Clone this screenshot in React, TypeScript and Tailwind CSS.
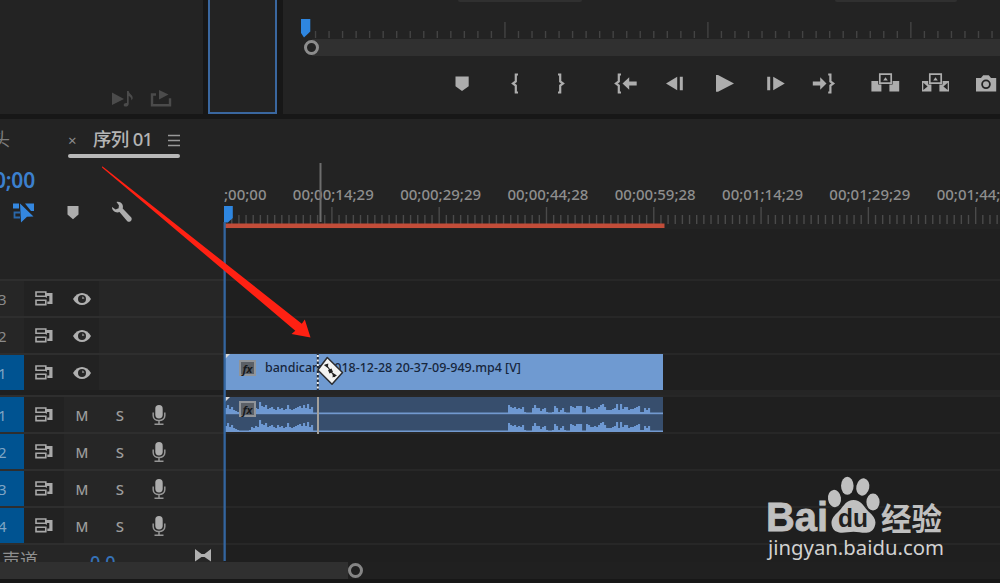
import type { ReactNode } from "react";

interface Track {
  id: string;
  tipo: "video" | "audio";
  ativo: boolean;
}

const VIDEO_TRACKS: Track[] = [
  { id: "3", tipo: "video", ativo: false },
  { id: "2", tipo: "video", ativo: false },
  { id: "1", tipo: "video", ativo: true },
];

const AUDIO_TRACKS: Track[] = [
  { id: "1", tipo: "audio", ativo: true },
  { id: "2", tipo: "audio", ativo: true },
  { id: "3", tipo: "audio", ativo: true },
  { id: "4", tipo: "audio", ativo: true },
];

const TIMECODES = [
  "00;00;14;29",
  "00;00;29;29",
  "00;00;44;28",
  "00;00;59;28",
  "00;01;14;29",
  "00;01;29;29",
  "00;01;44;28",
];

const FONT = "font-['Noto_Sans','Noto_Sans_CJK_SC',sans-serif]";

/* ---------- monitor ---------- */

const line = { fill: "none", stroke: "currentColor", strokeWidth: 2.2 };

const TRANSPORT: { nome: string; margem: string; icone: ReactNode }[] = [
  {
    nome: "marker",
    margem: "ml-[163px]",
    icone: <path d="M9.5 4.5h13.2v9.8L16 19l-6.5-4.7z" />,
  },
  {
    nome: "in",
    margem: "ml-[21px]",
    icone: <path d="M19 2.5h-2.2v7L14 11.5l2.8 2v7H19" {...line} />,
  },
  {
    nome: "out",
    margem: "ml-[13px]",
    icone: <path d="M14 2.5h2.2v7l2.8 2-2.8 2v7H14" {...line} />,
  },
  {
    nome: "go-in",
    margem: "ml-[33px]",
    icone: (
      <>
        <path d="M12 2.5H9.8v7L7 11.5l2.8 2v7H12" {...line} />
        <path d="M13.5 11.5l6.7-6.3v4.3h7.5v4h-7.5v4.3z" />
      </>
    ),
  },
  {
    nome: "step-back",
    margem: "ml-[18px]",
    icone: <path d="M7 11.5L18.2 4.8v13.4zM20.8 4.8h3v13.4h-3z" />,
  },
  {
    nome: "play",
    margem: "ml-[17px]",
    icone: <path d="M8 3h2l16 8.5-16 8.2H8z" />,
  },
  {
    nome: "step-fwd",
    margem: "ml-[19px]",
    icone: <path d="M25.8 11.5L14.2 4.8v13.4zM8.2 4.8h3v13.4h-3z" />,
  },
  {
    nome: "go-out",
    margem: "ml-[16px]",
    icone: (
      <>
        <path d="M21.2 2.5h2.2v7l2.8 2-2.8 2v7h-2.2" {...line} />
        <path d="M19.5 11.5l-6.3-6.3v4.3H5.8v4h7.4v4.3z" />
      </>
    ),
  },
  {
    nome: "lift",
    margem: "ml-[30px]",
    icone: (
      <>
        <path d="M10.8 2.2h11.4v9H10.8z" fill="none" stroke="currentColor" strokeWidth="1.7" />
        <path d="M14.2 8.6l2.3-3.4 2.3 3.4zM2.4 9h6.8v3.5h3.2v7h-10zM30.2 9h-6.6v3.5h-3.2v7h9.8z" />
      </>
    ),
  },
  {
    nome: "extract",
    margem: "ml-[18px]",
    icone: (
      <>
        <path d="M10.8 2.2h11.4v9H10.8z" fill="none" stroke="currentColor" strokeWidth="1.7" />
        <path d="M14.2 8.6l2.3-3.4 2.3 3.4zM3 9h6.2v3.5h3.2v7H3zM30 9h-6.4v3.5h-3.2v7H30z" />
        <path d="M4.3 10.8L8.6 14.5l-4.3 3.6zM28.7 10.8l-4.3 3.7 4.3 3.6z" fill="#232323" />
      </>
    ),
  },
  {
    nome: "camera",
    margem: "ml-[19px]",
    icone: (
      <>
        <path d="M6 6h5l2.2-2.8h5.6L21 6h5.2v13.4H6z" />
        <circle cx="16" cy="12.3" r="3.9" fill="none" stroke="#232323" strokeWidth="1.8" />
      </>
    ),
  },
];

function MonitorRuler() {
  const ticks = Array.from({ length: 51 }, (_, i) => i + 1);
  return (
    <svg className="block shrink-0" width="717" height="20" viewBox="283 19 717 20">
      {ticks.map((i) => {
        const x = 302 + i * 13.53;
        const maior = i % 15 === 0;
        return (
          <rect key={i} x={x - 0.7} y={maior ? 22 : 31} width="1.4" height={maior ? 16 : 7} fill="#434343" />
        );
      })}
      <path d="M301 19h9.3v12.5L304 37.5 301 33z" fill="#2e86e0" />
    </svg>
  );
}

function Monitor() {
  return (
    <div className="flex h-[114px] w-[717px] flex-col overflow-hidden bg-[#232323]">
      <div className="flex h-[19px] shrink-0 items-start overflow-hidden">
        <span className="-mt-[21px] ml-[42px] w-[133px] text-[15px] leading-6 text-[#174475]">00;00;00;00</span>
        <div className="h-[2px] w-[124px] rounded-b bg-[#303030]" />
        <div className="ml-[253px] h-[2px] w-[122px] rounded-b bg-[#303030]" />
      </div>
      <MonitorRuler />
      <div className="flex h-[17px] shrink-0 items-center bg-[#303030]">
        <div className="h-full w-[29px] bg-[#232323]" />
        <div className="-ml-[8px] h-[15px] w-[15px] rounded-full border-[3px] border-[#8c8c8c] bg-[#232323]" />
      </div>
      <div className="mt-4 flex shrink-0 items-center">
        {TRANSPORT.map((b) => (
          <svg key={b.nome} className={`block h-6 w-8 shrink-0 text-[#adadad] ${b.margem}`} viewBox="0 0 32 24" fill="currentColor">
            {b.icone}
          </svg>
        ))}
      </div>
    </div>
  );
}

function TopPanels() {
  return (
    <div className="flex h-[115px] shrink-0">
      <div className="flex h-[114px] w-[203px] items-end gap-4 bg-[#232323] pb-[5px] pl-[111px]">
        <svg width="23" height="20" viewBox="0 0 23 20" fill="#4b4b4b">
          <path d="M1 3.500l12 6.500L1 16z" />
          <path d="M16 2h1.700c.3 3 4.300 3.500 4 7.500l-1.200 2c0-3-1.300-3.800-2.800-4.500V15c0 3-5 3.500-5 1 0-1.700 1.800-2.400 3.300-2z" />
        </svg>
        <svg width="22" height="20" viewBox="0 0 22 20" fill="#4b4b4b">
          <path d="M9 1l9.500 4.500L9 10.500z" />
          <path d="M6 5.500H2v10.700h18v-7" fill="none" stroke="#4b4b4b" strokeWidth="2.4" />
        </svg>
      </div>
      <div className="ml-[5px] h-[114px] w-[69px] border-2 border-t-0 border-[#3a679f] bg-[#232323]" />
      <div className="w-[6px]" />
      <Monitor />
    </div>
  );
}

/* ---------- timeline ---------- */

function TimelineControls() {
  return (
    <div className="flex h-[160px] w-[224px] shrink-0 flex-col overflow-hidden bg-[#232323]">
      <div className="flex h-[35px] shrink-0 items-center text-[18px] text-[#b4b4b4]">
        <span className="-ml-[8px] mt-[5px] w-[20px] text-[#7c7c7c]">头</span>
        <span className="ml-[56px] mt-[7px] w-[8px] text-[15px] text-[#8c8c8c]">×</span>
        <span className="ml-[17px] mt-[5px] w-[61px] whitespace-nowrap text-[18.5px] font-medium tracking-[-0.7px]">序列 01</span>
        <svg className="ml-[14px] mt-[8px]" width="12" height="13" viewBox="0 0 12 13" stroke="#999" strokeWidth="1.7">
          <path d="M0 1.500h12M0 6.500h12M0 11.500h12" />
        </svg>
      </div>
      <div className="ml-[68px] h-[4px] w-[112px] shrink-0 rounded-full bg-[#b8b8b8]" />
      <div className="flex h-[38px] w-[35px] shrink-0 items-center justify-end pt-[7px] text-[21px] font-semibold tracking-[-0.2px] text-[#3c80ce]">
        0;00
      </div>
      <div className="mt-[2px] flex h-[28px] shrink-0 items-center pl-[12px] text-[#adadad]">
        <svg width="22" height="22" viewBox="0 0 22 22" fill="#3487df">
          <path d="M1 2.500h6v5H1zM13 2.500h9V10h-3zM8 2.500l13.500 13-6.500.3L9 21.500z" />
          <path d="M8 11.500H2.500v5H8" fill="none" stroke="#2a67a9" strokeWidth="1.8" />
        </svg>
        <svg className="ml-[32px]" width="14" height="16" viewBox="0 0 14 16" fill="currentColor">
          <path d="M1.500 2h11v8.500L7 15.200l-5.500-4.700z" />
        </svg>
        <svg className="ml-[31px]" width="22" height="22" viewBox="0 0 22 22" fill="currentColor">
          <path d="M5.500 1c4-1 7.500 2.500 6.200 6.500l8.600 9c1.500 2.700-1.500 5.500-4 3.800L8.500 11C5 12.500.7 9.700 1 6l3.600 2.600 3-1.400.3-3z" />
        </svg>
      </div>
    </div>
  );
}

function Ruler() {
  const ticks = Array.from({ length: 108 }, (_, i) => i + 1);
  return (
    <div className="flex h-[160px] w-[776px] flex-col bg-[#202020]">
      <div className="flex h-[86px] shrink-0 items-end overflow-hidden whitespace-nowrap bg-[#232323] pb-px text-[15px] font-medium leading-5 text-[#8e8e8e]">
        <span className="w-[55.7px] shrink-0">;00;00</span>
        {TIMECODES.map((t) => (
          <span key={t} className="w-[107.3px] shrink-0 text-center">
            {t}
          </span>
        ))}
      </div>
      <svg className="block shrink-0 bg-[#232323]" width="776" height="24" viewBox="224 205 776 24">
        {ticks.map((i) => {
          const x = 224.6 + i * 7.153;
          const maior = i % 15 === 0;
          return (
            <rect key={i} x={x - 0.7} y={maior ? 207 : 215} width="1.4" height={maior ? 17 : 9} fill="#4a4a4a" />
          );
        })}
        <rect x="225" y="223.500" width="439.500" height="4.500" fill="#c24d39" />
        <path d="M224 206h8.800v12l-5 4.500H224z" fill="#2e86e0" />
      </svg>
    </div>
  );
}

function SyncIcon() {
  return (
    <svg className="block shrink-0" width="18" height="15" viewBox="0 0 18 15" fill="none" stroke="#a9a9a9" strokeWidth="1.600">
      <path d="M1 1h9.800v4.300H1zM1 9.300h9.800v4.300H1z" />
      <path d="M10.800 2h6.700v11h-5.200v-2.500h2V5h-2.500v1.800h-1z" fill="#a9a9a9" stroke="none" />
    </svg>
  );
}

function EyeIcon() {
  return (
    <svg className="ml-[20px] block shrink-0" width="18" height="14" viewBox="0 0 18 14">
      <path d="M0 7C4.500-1 13.500-1 18 7c-4.500 8-13.500 8-18 0z" fill="#b0b0b0" />
      <circle cx="9" cy="7" r="4" fill="#262626" />
      <path d="M9 4.600a2.400 2.400 0 0 1 2.400 2.400H9z" fill="#777" />
    </svg>
  );
}

function MicIcon() {
  return (
    <svg className="block shrink-0" width="14" height="22" viewBox="0 0 14 22" fill="#adadad">
      <rect x="3.300" y="1" width="7.400" height="13.500" rx="3.700" />
      <path d="M1.200 8.500v3.200c0 6.500 11.600 6.500 11.600 0V8.500M7 16.500V20M2.500 20.200h9" fill="none" stroke="#969696" strokeWidth="1.500" />
    </svg>
  );
}

function TrackHeader({ track }: { track: Track }) {
  return (
    <div className="flex h-[37px] shrink-0 items-center border-t-2 border-[#2e2e2e] bg-[#262626]">
      <div
        className={`flex h-full w-6 shrink-0 items-center text-[15px] ${
          track.ativo ? "bg-[#005391] text-[#7fa5c4]" : "bg-[#262626] text-[#8a8a8a]"
        }`}
      >
        <span className="-ml-[2px] mt-px">{track.id}</span>
      </div>
      <div
        className={`flex h-full shrink-0 items-center bg-[#222222] pl-[11px] ${
          track.tipo === "video" ? "w-[75px]" : "w-[40px]"
        }`}
      >
        <SyncIcon />
        {track.tipo === "video" && <EyeIcon />}
      </div>
      {track.tipo === "audio" && (
        <>
          <span className="ml-[8px] mt-[2px] w-[20px] text-center text-[14px] font-medium text-[#9c9c9c]">M</span>
          <span className="ml-[18px] mt-[2px] w-[20px] text-center text-[15px] font-medium text-[#9c9c9c]">S</span>
          <div className="ml-[22px]">
            <MicIcon />
          </div>
        </>
      )}
    </div>
  );
}

function TrackHeaders() {
  return (
    <div className="flex h-[283px] w-[224px] shrink-0 flex-col overflow-hidden">
      {VIDEO_TRACKS.map((t) => (
        <TrackHeader key={t.id} track={t} />
      ))}
      <div className="h-[5px] shrink-0 bg-[#1f1f1f]" />
      {AUDIO_TRACKS.map((t) => (
        <TrackHeader key={t.id} track={t} />
      ))}
      <div className="flex h-[19px] shrink-0 items-start overflow-hidden border-t-2 border-[#2e2e2e] bg-[#262626]">
        <span className="ml-[2px] mt-[5px] w-[88px] text-[18px] leading-[20px] text-[#8f8f8f]">声道</span>
        <span className="mt-[7px] w-[104px] text-[18px] font-medium leading-[20px] text-[#3672b8]">0.0</span>
        <svg className="mt-[4px]" width="18" height="13" viewBox="0 0 18 13" fill="#b0b0b0">
          <path d="M1 0l6.500 5h3L17 0v12.500L10.500 8h-3L1 12.500z" />
        </svg>
      </div>
    </div>
  );
}

function FxBadge() {
  return (
    <span className="flex h-[16px] w-[17px] shrink-0 items-center justify-center border-2 border-[#909499] bg-[#5b6067] text-[11px] font-bold italic leading-none text-[#16191d]">
      fx
    </span>
  );
}

// one peak height per 2px column
const ONDA_INICIO = [5, 8, 4, 6, 3, 2, 1, 0, 0, 0, 0, 0, 1, 4, 3, 5, 4, 11, 7, 6, 8, 4, 5, 6, 4, 3, 6, 4, 5, 3, 4, 8, 4, 3, 4, 5, 6, 7, 5, 8, 5, 9, 4, 6];
const ONDA_FIM = [8, 6, 5, 6, 4, 5, 4, 6, 1, 0, 0, 0, 5, 8, 5, 5, 2, 4, 5, 1, 0, 0, 1, 7, 5, 1, 3, 5, 1, 0, 0, 7, 6, 5, 7, 7, 7, 0, 0, 7, 6, 4, 4, 5, 4, 6, 8, 9, 6, 3, 3, 3, 4, 5, 9, 3, 9, 4, 6, 6, 3, 4, 4, 5, 6, 7, 1, 1, 5, 3, 5];

function Waveform({ base }: { base: number }) {
  return (
    <g fill="#6d98d2">
      {ONDA_INICIO.map((h, i) => (
        <rect key={`a${i}`} x={1 + i * 2} y={base - h} width="2.100" height={h} />
      ))}
      {ONDA_FIM.map((h, i) => (
        <rect key={`b${i}`} x={284 + i * 2} y={base - h} width="2.100" height={h} />
      ))}
      <rect x="0" y={base - 0.5} width="439" height="1.700" fill="#7299cf" />
    </g>
  );
}

function Lanes() {
  return (
    <div className="flex h-[283px] w-[776px] flex-col overflow-hidden bg-[#1f1f1f]">
      <div className="h-[37px] shrink-0 border-t-2 border-[#272727]" />
      <div className="h-[37px] shrink-0 border-t-2 border-[#272727]" />
      <div className="flex h-[37px] shrink-0 flex-col border-t-2 border-[#272727]">
        <div className="-mt-px flex h-[36px] w-[439px] items-start bg-[#6f9ad1]">
          <svg className="shrink-0" width="6" height="6">
            <path d="M0 0h6L0 6z" fill="#d8d8d8" />
          </svg>
          <div className="ml-[9px] mt-[6px] flex items-center gap-[8px] whitespace-nowrap text-[12.5px] font-medium leading-4 text-[#17263c]">
            <FxBadge />
            <svg className="overflow-visible" width="257" height="16">
              <text x="1" y="12" textLength="256" lengthAdjust="spacingAndGlyphs" fill="currentColor">
                bandicam 2018-12-28 20-37-09-949.mp4 [V]
              </text>
            </svg>
          </div>
        </div>
      </div>
      <div className="h-[5px] shrink-0 bg-[#252525]" />
      <div className="flex h-[37px] shrink-0 border-t-2 border-[#272727]">
        <div className="grid h-[36px] w-[439px] bg-[#374e6d]">
          <svg className="col-start-1 row-start-1 block" width="439" height="36">
            <path d="M0 0h6L0 6z" fill="#d8d8d8" />
            <Waveform base={16} />
            <Waveform base={34} />
          </svg>
          <div className="col-start-1 row-start-1 pl-[15px] pt-[4px]">
            <FxBadge />
          </div>
        </div>
      </div>
      <div className="h-[37px] shrink-0 border-t-2 border-[#272727]" />
      <div className="h-[37px] shrink-0 border-t-2 border-[#272727]" />
      <div className="h-[37px] shrink-0 border-t-2 border-[#272727]" />
      <div className="h-[19px] shrink-0 border-t-2 border-[#272727]" />
    </div>
  );
}

/* ---------- overlays ---------- */

function Overlay() {
  return (
    <svg className="pointer-events-none absolute inset-0" width="1000" height="583" viewBox="0 0 1000 583">
      <rect x="223.500" y="222" width="2.300" height="339" fill="#33659f" />
      <rect x="319.500" y="163" width="2" height="59" fill="#6d6d6d" />
      <path d="M317.800 353v38" stroke="#222a36" strokeWidth="2" />
      <path d="M317.800 355v36" stroke="#f0f0f0" strokeWidth="2" strokeDasharray="2 2.500" />
      <rect x="317" y="397" width="2" height="37" fill="#a3a09b" />
      <path d="M327.300 357.500L342.500 372.500 332 384.300 317.800 370z" fill="#f4f4f2" stroke="#2b2d31" strokeWidth="1.500" strokeLinejoin="round" />
      <path d="M326 364.500l9 12.500" stroke="#222" strokeWidth="1.200" />
      <path d="M323.800 365l4.500-1.500-.5 4.500zM328 370l3.500-1.500 1.500 3.500-3.500 1.500zM337 375.500l-4.500 2 .5-4.500z" fill="#222" />
      <path d="M102.300 166.200L301.800 323.800l3-4.300 5.700 18-19-3.500 3.800-3.300L102 167.500z" fill="#ff2113" />
    </svg>
  );
}

function Watermark() {
  return (
    <svg className="pointer-events-none absolute left-[760px] top-[470px] text-[#c0c0c0]" width="200" height="100" viewBox="760 470 200 100" fill="currentColor">
      <text x="766" y="531" textLength="62" lengthAdjust="spacingAndGlyphs" className="font-['Liberation_Sans',sans-serif] text-[40px] font-bold leading-none" stroke="currentColor" strokeWidth="0.800">
        Bai
      </text>
      <ellipse cx="834.500" cy="498.500" rx="6.500" ry="8.700" transform="rotate(-8 834.500 498.500)" />
      <ellipse cx="847.300" cy="485.800" rx="6.300" ry="9" />
      <ellipse cx="862.800" cy="487" rx="6.500" ry="8.700" transform="rotate(12 862.800 487)" />
      <ellipse cx="873" cy="502" rx="6.600" ry="8.500" />
      <path d="M853.500 500c8 0 10 6.500 15 11.500 6 5 8.500 9.500 6 15.500-2.500 6.500-9 6.300-15 5.200-4-.7-8-.7-12 0-6 1-12.500 1-15-4.700-2.800-6.500.5-11 6-16 5-4.500 7-11.500 15-11.500z" />
      <text x="838" y="526.500" textLength="30" lengthAdjust="spacingAndGlyphs" fill="#202020" className="font-['Liberation_Sans',sans-serif] text-[25px] font-bold">
        du
      </text>
      <text x="881" y="529.500" textLength="61" lengthAdjust="spacingAndGlyphs" className="font-['Noto_Sans_CJK_SC',sans-serif] text-[31px] font-bold">
        经验
      </text>
      <text x="768" y="555" textLength="176" lengthAdjust="spacingAndGlyphs" className="font-['Noto_Sans',sans-serif] text-[20px]" fill="#d2d2d2">
        jingyan.baidu.com
      </text>
    </svg>
  );
}

export default function App() {
  return (
    <div className={`relative flex h-[583px] w-[1000px] flex-col overflow-hidden bg-[#171717] ${FONT}`}>
      <TopPanels />
      <div className="mt-[4px] flex shrink-0">
        <TimelineControls />
        <Ruler />
      </div>
      <div className="flex shrink-0">
        <TrackHeaders />
        <Lanes />
      </div>
      <div className="flex h-[17px] shrink-0 items-center bg-[#202020]">
        <div className="h-full w-[348px] bg-[#303030]" />
        <div className="h-[15px] w-[15px] rounded-full border-[3px] border-[#858585] bg-[#202020]" />
      </div>
      <Overlay />
      <Watermark />
    </div>
  );
}
